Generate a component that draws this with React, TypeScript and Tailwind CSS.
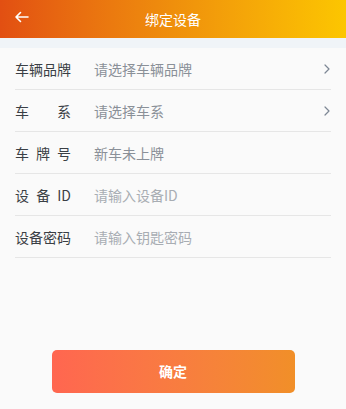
import React from "react";

interface FormRow {
  label: string[];
  value: string;
  placeholder: boolean;
  arrow: boolean;
}

const rows: FormRow[] = [
  { label: ["车辆品牌"], value: "请选择车辆品牌", placeholder: false, arrow: true },
  { label: ["车", "系"], value: "请选择车系", placeholder: false, arrow: true },
  { label: ["车", "牌", "号"], value: "新车未上牌", placeholder: false, arrow: false },
  { label: ["设", "备", "ID"], value: "请输入设备ID", placeholder: true, arrow: false },
  { label: ["设备密码"], value: "请输入钥匙密码", placeholder: true, arrow: false },
];

export default function App(): React.JSX.Element {
  return (
    <div
      className="w-[346px] h-[409px] flex flex-col bg-[#fafafa] overflow-hidden"
      style={{ fontFamily: '"Noto Sans CJK SC", "Noto Sans", sans-serif' }}
    >
      {/* Header */}
      <div className="h-[38px] shrink-0 relative flex items-center justify-center bg-gradient-to-r from-[#e24f12] via-[#ef8f0c] to-[#fcc600]">
        <button type="button" className="absolute left-[14px] top-[11px] text-white" aria-label="返回">
          <svg width="15" height="12" viewBox="0 0 15 12" fill="none" stroke="currentColor" strokeWidth="1.6" strokeLinecap="round" strokeLinejoin="round" aria-hidden="true">
            <path d="M14 6H2M6.5 1.5L2 6l4.5 4.5" />
          </svg>
        </button>
        <span className="text-white text-[14px] leading-none">绑定设备</span>
      </div>

      {/* Gap strip */}
      <div className="h-[10px] shrink-0 bg-[#f0f4f8]" />

      {/* Form */}
      <div className="px-[15px]">
        {rows.map((row, index) => (
          <div key={index} className="h-[42px] flex items-center border-b border-[#e6e6e6]">
            <div className="w-[79px] shrink-0">
              <div className="w-[56px] flex justify-between text-[14px] text-[#3a3f45] leading-none">
                {row.label.map((part, i) => (
                  <span key={i}>{part}</span>
                ))}
              </div>
            </div>
            <span
              className={`flex-1 text-[14px] leading-none ${
                row.placeholder ? "text-[#a8adb3]" : "text-[#8a9098]"
              }`}
            >
              {row.value}
            </span>
            {row.arrow && (
              <svg width="6" height="10" viewBox="0 0 6 10" fill="none" stroke="#7d8794" strokeWidth="1.2" strokeLinecap="round" strokeLinejoin="round" className="mr-[1px]" aria-hidden="true">
                <path d="M1 1l4 4-4 4" />
              </svg>
            )}
          </div>
        ))}
      </div>

      <div className="flex-1" />

      {/* Confirm button */}
      <div className="flex justify-center pb-[16px]">
        <button
          type="button"
          className="w-[243px] h-[43px] rounded-[5px] bg-gradient-to-r from-[#ff6650] to-[#f18f28] text-white text-[14px] font-bold"
        >
          确定
        </button>
      </div>
    </div>
  );
}
